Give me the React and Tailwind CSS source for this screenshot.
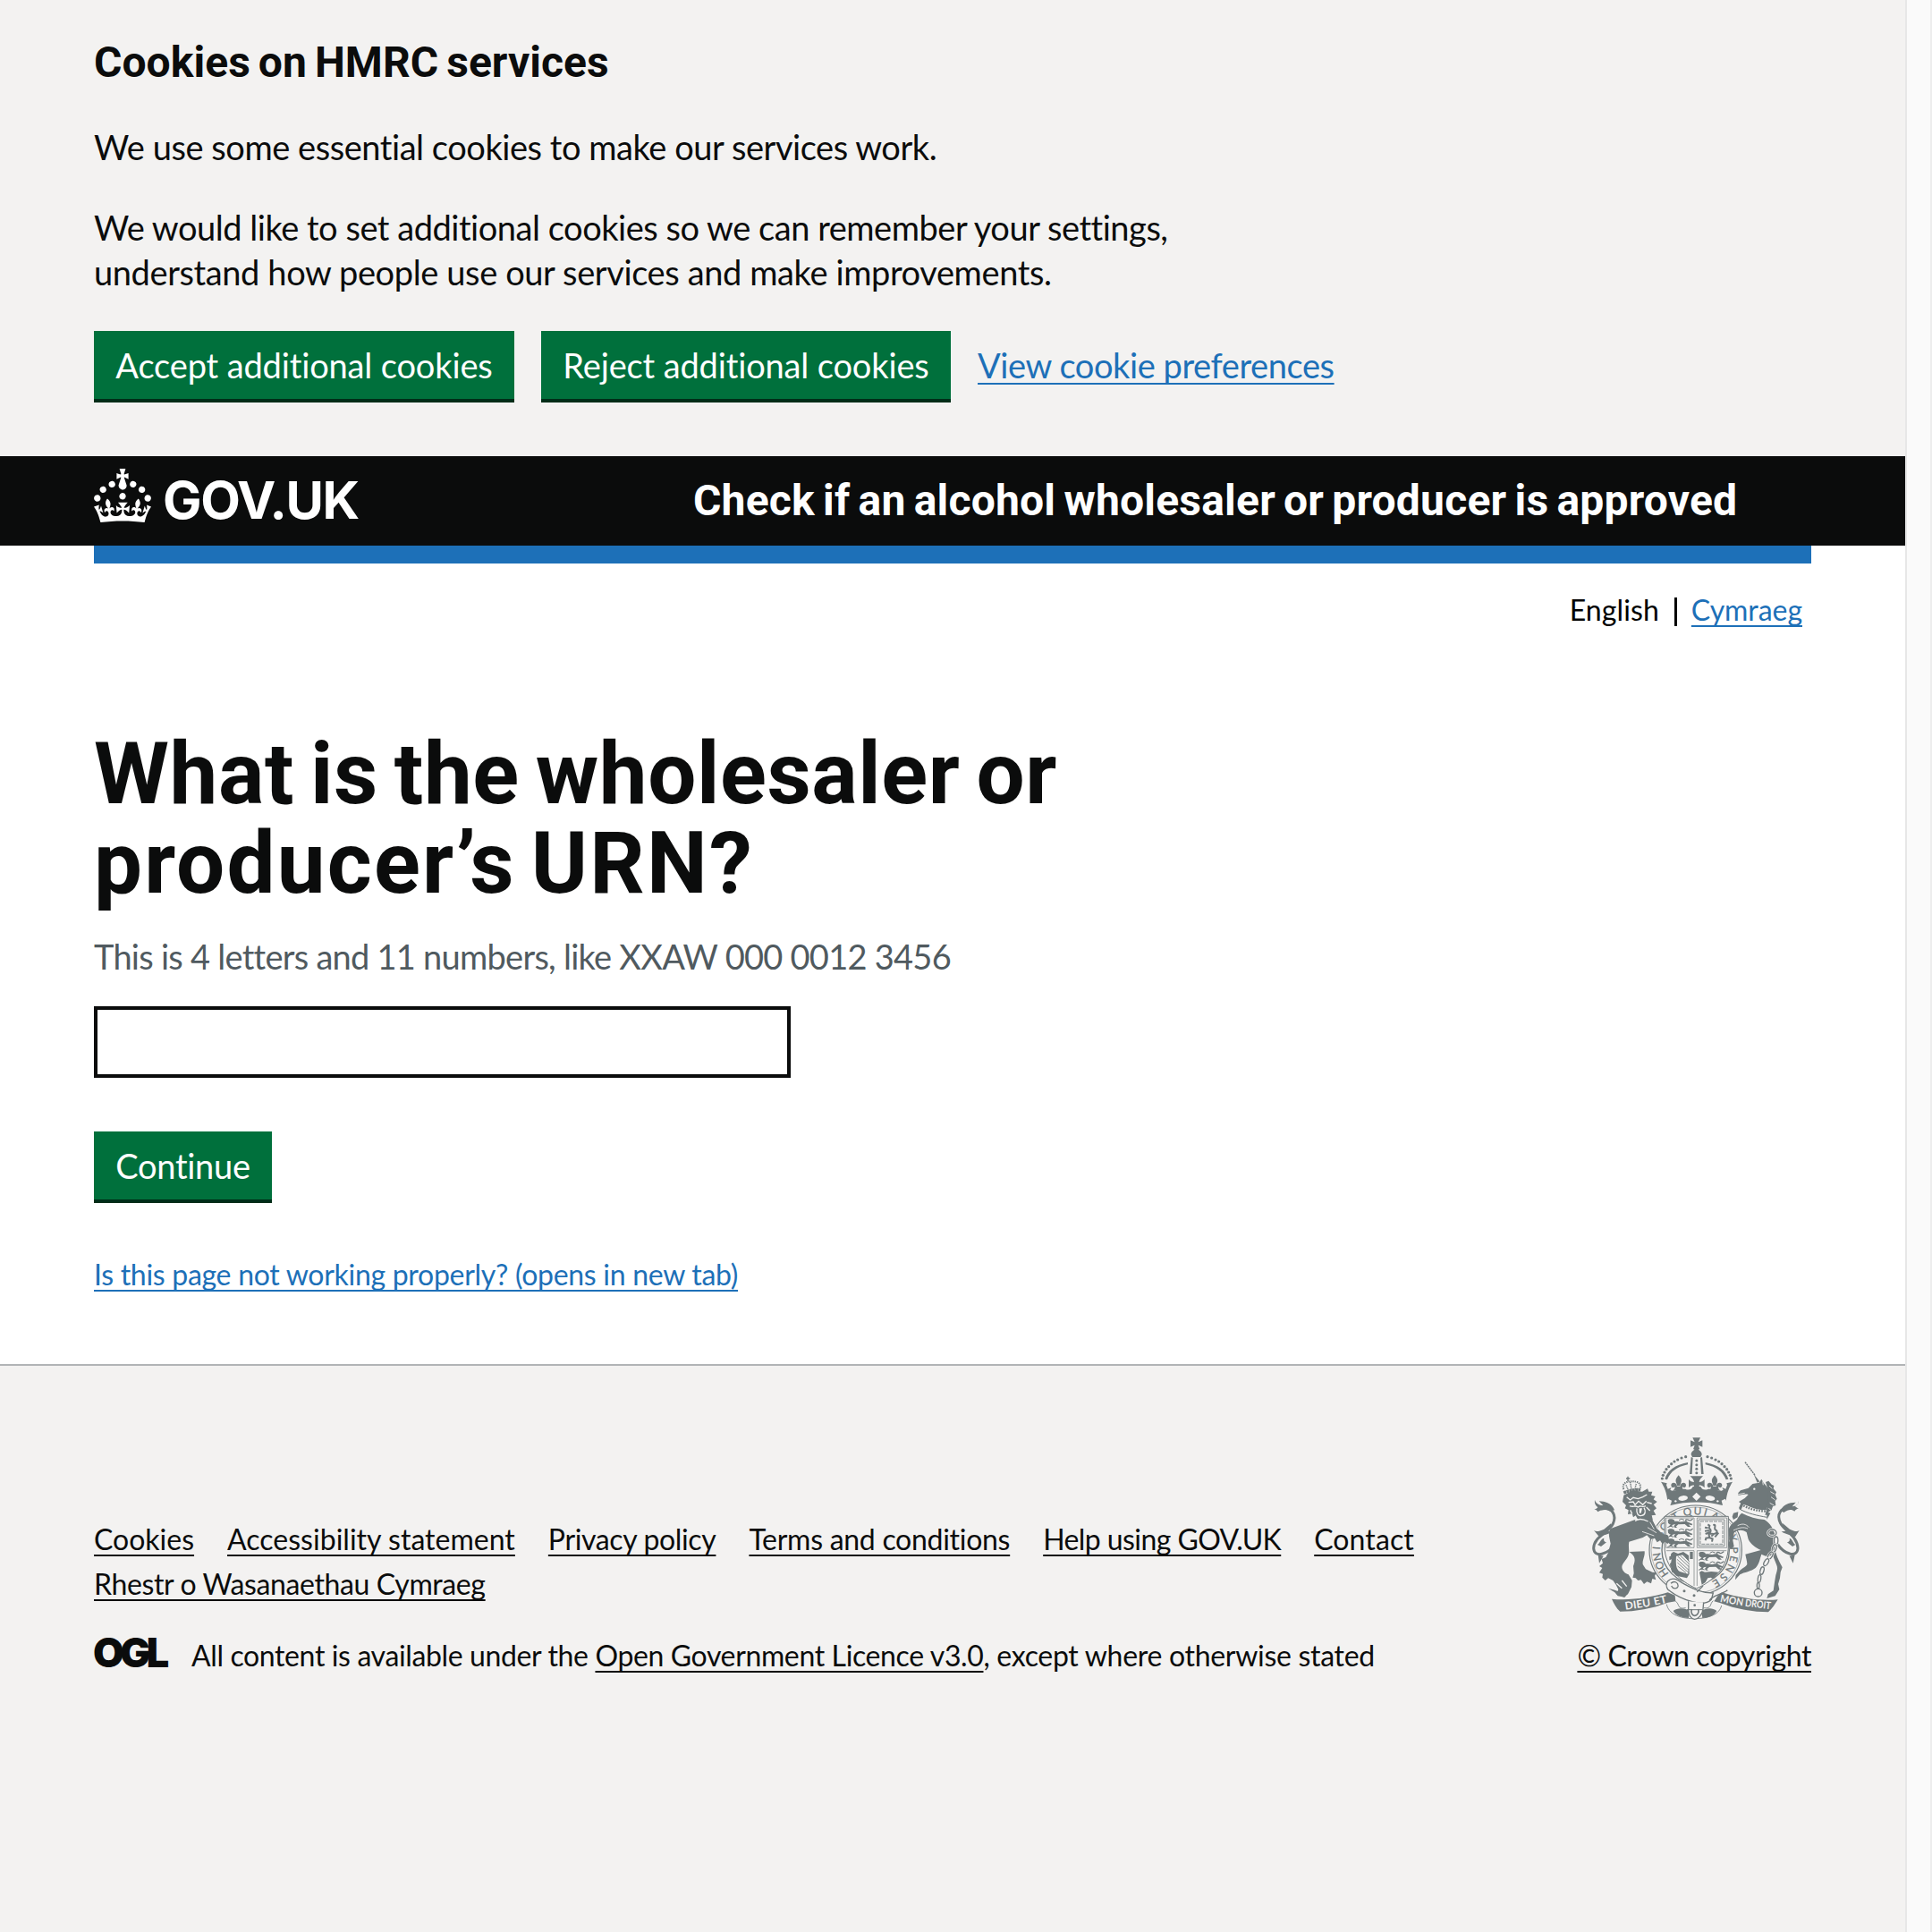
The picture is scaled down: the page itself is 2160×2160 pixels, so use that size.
const BODY = "font-['Lato',sans-serif] [font-variant-ligatures:none]";
const HEAD = "font-['Roboto',sans-serif] font-bold";
const LINK =
  "underline decoration-2 underline-offset-[5px] [text-decoration-skip-ink:none]";

function GreenButton({ children, className }) {
  return (
    <button
      type="button"
      className={`h-[76px] shrink-0 whitespace-nowrap bg-[#00703c] pb-[1px] text-center text-[38px] leading-[38px] text-white shadow-[0_4px_0_#002d18] ${className}`}
    >
      {children}
    </button>
  );
}

function Crown() {
  return (
    <svg viewBox="0 0 32 30" className="h-[60px] w-16 shrink-0" fill="currentColor" aria-hidden="true">
      <path d="M22.6 10.4c-1 .4-2-.1-2.4-1-.4-.9.1-2 1-2.4.9-.4 2 .1 2.4 1s-.1 2-1 2.4m-5.9 6.7c-.9.4-2-.1-2.4-1-.4-.9.1-2 1-2.4.9-.4 2 .1 2.4 1s-.1 2-1 2.4m10.8-3.7c-1 .4-2-.1-2.4-1-.4-.9.1-2 1-2.4.9-.4 2 .1 2.4 1s0 2-1 2.4m3.3 4.8c-1 .4-2-.1-2.4-1-.4-.9.1-2 1-2.4.9-.4 2 .1 2.4 1s-.1 2-1 2.4M17 4.7l2.3 1.2V2.5l-2.3.7-.2-.2.9-3h-3.4l.9 3-.2.2c-.1.1-2.3-.7-2.3-.7v3.4L15 4.7c.1.1.1.2.2.2l-1.3 4c-.1.2-.1.4-.1.6 0 1.1.8 2 1.9 2.2h.7c1-.2 1.9-1.1 1.9-2.1 0-.2 0-.4-.1-.6l-1.3-4c-.1-.2 0-.2.1-.3m-7.6 5.7c.9.4 2-.1 2.4-1 .4-.9-.1-2-1-2.4-.9-.4-2 .1-2.4 1s0 2 1 2.4m-5 3c.9.4 2-.1 2.4-1 .4-.9-.1-2-1-2.4-.9-.4-2 .1-2.4 1s.1 2 1 2.4m-3.2 4.8c.9.4 2-.1 2.4-1 .4-.9-.1-2-1-2.4-.9-.4-2 .1-2.4 1s0 2 1 2.4m14.8 11c4.4 0 8.6.3 12.3.8 1.1-4.5 2.4-7 3.7-8.8l-2.5-.9c.2 1.3.3 1.9 0 2.7-.4-.4-.8-1.1-1.1-2.3l-1.2 4c.7-.5 1.3-.8 2-.9-1.1 2.5-2.6 3.1-3.5 3-1.1-.2-1.7-1.2-1.5-2.1.3-1.2 1.5-1.5 2.1-.1 1.1-2.3-.8-3-2-2.3 1.9-1.9 2.1-3.5.6-5.6-2.1 1.6-2.1 3.2-1.2 5.5-1.2-1.4-3.2-.6-2.5 1.6.9-1.4 2.1-.5 1.9.8-.2 1.1-1.7 2.1-3.5 1.9-2.7-.2-2.9-2.1-2.9-3.6.7-.1 1.9.5 2.9 1.9l.4-4.3c-1.1 1.1-2.1 1.4-3.2 1.4.4-1.2 2.1-3 2.1-3h-5.4s1.7 1.9 2.1 3c-1.1 0-2.1-.2-3.2-1.4l.4 4.3c1-1.4 2.2-2 2.9-1.9-.1 1.5-.2 3.4-2.9 3.6-1.9.2-3.4-.8-3.5-1.9-.2-1.3 1-2.2 1.9-.8.7-2.3-1.2-3-2.5-1.6.9-2.2.9-3.9-1.2-5.5-1.5 2-1.3 3.7.6 5.6-1.2-.7-3.1 0-2 2.3.6-1.4 1.8-1.1 2.1.1.2.9-.3 1.9-1.5 2.1-.9.2-2.4-.5-3.5-3 .6 0 1.2.3 2 .9l-1.2-4c-.3 1.1-.7 1.9-1.1 2.3-.3-.8-.2-1.4 0-2.7l-2.9.9C1.3 23 2.6 25.5 3.7 30c3.7-.5 7.9-.8 12.3-.8" />
    </svg>
  );
}

const INK = "#6f787a";
const PAPER = "#f3f2f1";
const MOTTO = [
  ["H", -125], ["O", -113], ["N", -100], ["I", -87], ["S", -66], ["O", -53], ["T", -31], ["Q", -12], ["U", 3], ["I", 15],
  ["A", 30], ["Y", 72], ["P", 90], ["E", 103], ["N", 118], ["S", 134], ["E", 148],
];
const DOTS = [
  [353, 188], [356, 177], [361, 167], [367, 157], [375, 148], [384, 139], [394, 131], [405, 125], [418, 119], [432, 115],
];

/* A lion passant guardant, facing left. */
function Passant({ x, y }) {
  return (
    <g transform={`translate(${x} ${y})`} fill={INK}>
      <path d="M1 3l6-3h8l7 3 2 6-4 7-6 4-7-2-5-5z" />
      <path d="M22 8c10-3 16 2 24 1s12-4 20 0l18 8-3 4-11-3 8 8h-10l-10-9-22 1-8 7 5 4h-9l-3-5 5-7-9 2-4 7h-9l4-5z" />
      <path d="M64 10c-8-10 2-10 8-6 6 3 8-2 13-5" fill="none" stroke={INK} strokeWidth="4" />
      <path d="M0 28l10-4 10 3M38 4l8-4 10 3" fill="none" stroke={INK} strokeWidth="3" />
    </g>
  );
}

function Fleur({ x }) {
  return (
    <g transform={`translate(${x} 205)`} fill={INK}>
      <path d="M0-28c-7 8-11 14-9 22 2 6 4 9 4 14h10c0-5 2-8 4-14 2-8-2-14-9-22z" />
      <path d="M-5 10c0-14-20-18-20-4 0 8 9 10 12 4 2 8-3 12-8 14h42c-5-2-10-6-8-14 3 6 12 4 12-4 0-14-20-10-20 4z" />
    </g>
  );
}

function RoyalArms() {
  return (
    <svg viewBox="118 50 696 612" className="h-[204px] w-[232px]" aria-hidden="true">
      {/* garter */}
      <g fill="none" stroke={INK}>
        <ellipse cx="465" cy="428" rx="155" ry="150" strokeWidth="3.500" />
        <ellipse cx="465" cy="428" rx="149" ry="144" strokeWidth="1.500" />
        <ellipse cx="465" cy="428" rx="113" ry="112" strokeWidth="4" />
      </g>
      <g fill={INK} stroke={INK} strokeWidth="0.800" textAnchor="middle" className="font-['Lato',sans-serif] text-[35px]">
        {MOTTO.map(([letter, angle]) => (
          <text key={angle} transform={`translate(465 428) rotate(${angle}) translate(0 -119)`}>{letter}</text>
        ))}
      </g>

      {/* imperial crown */}
      <g fill={INK}>
        <path d="M455 51h26l-7 15 14-6v22l-14-6 5 14h-22l5-14-14 6V60l14 6z" />
        <path d="M461 88h14c-1 6 12 8 11 20l-4 8h-28l-4-8c-1-12 12-14 11-20z" />
        {DOTS.map(([x, y]) => (
          <g key={x}>
            <circle cx={x} cy={y} r="4.800" />
            <circle cx={937 - x} cy={y} r="4.800" />
          </g>
        ))}
        <path d="M362 190c8-28 34-48 77-56v7c-38 8-58 24-69 51zM575 190c-8-28-34-48-77-56v7c38 8 58 24 69 51z" />
        <path d="M450 116l6 2-3 55h-8zM487 116l-6 2 3 55h8z" />
        <circle cx="468.500" cy="128" r="4.500" />
        <circle cx="468.500" cy="142" r="4.500" />
        <circle cx="468.500" cy="156" r="4.500" />
        <circle cx="468.500" cy="169" r="4.500" />
        <path d="M349 199l20 5-2 6 5 13 12-5-4 8c10 6 20 4 26-3h24c12 6 22 2 26-8h26c4 10 14 14 26 8h24c6 7 16 9 26 3l-4-8 12 5 5-13-2-6 20-5c-10 16-20 38-22 66-60-14-134-14-196 0-2-28-11-50-22-66z" />
        <path d="M447 180h43c-9 8-12 14-13 20 7 0 13-3 18-9v28c-6-7-12-9-18-8 1 14 4 18 10 24h-37c6-6 9-10 10-24-6-1-12 1-18 8v-28c5 6 11 9 18 9-1-6-4-12-13-20z" />
        <path d="M378 262c60-22 120-22 181 0l-4 16c-50-14-122-14-174 0z" />
      </g>
      <Fleur x={408} />
      <Fleur x={529} />
      <g fill={PAPER}>
        <path d="M373 256l12 6-3 12-9 2-6-10zM564 256l-12 6 3 12 9 2 6-10zM468 235l14 14-14 14-14-14z" />
        <ellipse cx="423" cy="254" rx="16" ry="8.500" transform="rotate(-7 423 254)" />
        <ellipse cx="514" cy="254" rx="16" ry="8.500" transform="rotate(7 514 254)" />
        <circle cx="398" cy="264" r="3.500" />
        <circle cx="539" cy="264" r="3.500" />
      </g>

      {/* shield */}
      <path d="M361 315h214v100c0 70-52 118-107 142-55-24-107-72-107-142z" fill={PAPER} stroke={INK} strokeWidth="3" />
      <g fill="none" stroke={INK} strokeWidth="2">
        <path d="M366 320h94v100h-94zM470 320h100v100H470zM367 430h93v118M470 430h99M470 430v118" />
        <path d="M481 332h75v76h-75z" strokeWidth="2.500" strokeDasharray="12 3" />
        <path d="M475 326h87v88h-87z" strokeWidth="2.500" />
      </g>
      <Passant x={371} y={324} />
      <Passant x={371} y={357} />
      <Passant x={371} y={390} />
      <Passant x={475} y={434} />
      <Passant x={475} y={467} />
      <path d="M478 502l8-4 10 4 22-2 24 2-18 22-8-4-10 2-8 14-12 8z" fill={INK} />
      {/* lion rampant */}
      <path d="M506 342l6 4-2 8c10 6 6 14 0 18l14 2M496 352l10 2M512 362l-16 2M498 374l10-4 4 16-12 2-2 8M510 386l12 4-2 10M524 344c14-4 0 12 8 16s6 12-6 14l-8 8M530 384l12-14" fill="none" stroke={INK} strokeWidth="6" />
      {/* harp */}
      <path d="M392 434c-12 4-12 12-6 20-6 18-4 36 0 46l14 14 36 8 8-14-2-62-18-12-18 6z" fill={INK} />
      <path d="M400 448c10 2 20-8 28 0l14 18-2 42-28-8c-12-8-14-24-12-52z" fill={PAPER} />
      <path d="M404 470l38 34M403 459l39 36M405 482l28 22M406 450l37 34M413 446l30 28M422 444l22 22" stroke={INK} strokeWidth="2.500" />
      <path d="M377 450l10-4v12l-10 4zM379 472l9-2v12l-8 2zM383 492l8-2 4 10-8 4zM446 434h10v24h-10z" fill={INK} />

      {/* lion: tail */}
      <path d="M148 290c40-8 52 22 40 50-14 30-64 42-65 82 2 34 48 22 76-18" fill="none" stroke={INK} strokeWidth="9" />
      <path d="M127 260c4 12 16 18 28 18l-14-14c20 0 44 8 52 30l-14 4c-14-8-28-8-42 2-2-6-6-8-12-8 6-2 10-4 12-8-6-4-12-12-10-24zM124 362c10 6 18 2 34-4l24-20c0 12-6 20-14 26l20 2c-14 10-34 12-46 18zM136 410c10-6 8-18 22-22-2 8 0 12 8 14l-18 14zM138 444l4 28 14-24z" fill={INK} />
      {/* lion: body, hind legs */}
      <g fill={INK}>
        <path d="M262 326l50 6 20 32-30 14-14 8-46 14c-4 20 4 34-4 50-6 12-18 22-20 34 0 12 10 22 22 26l12 20-2 22-12 24-14 10-14-8-10-2 6-16-8-16-10-14-16-8-10 8-10-10 2-12-12-4 10-16-10-6 12-10-4-14 14-6 8-16 8-30c-4-22-10-34 0-50z" />
        <path d="M242 434l52-2c2 18-8 28-6 44l10 16 22 10 14 2-6 10 4 14-12-4-4 16-14-6-10 8-10-14-10 2-8-8-10-2 4-14-2-24c8-20 8-34-14-48z" />
        <path d="M172 556l22 6 10 4 14-6 18 14-8 12-24-4-10-12z" />
        <path d="M300 316l14 0 22 40 18 18 18 4 4 14-4 16-10-8-8 8-8-12-10 6-8-14-14 4-12-14-22-6-18-24z" />
      </g>
      <path d="M200 540l18 16M218 530l16 20" stroke={PAPER} strokeWidth="4" />
      {/* lion: mane and face */}
      <path d="M224 244l-4 22 12 12-4 10 12 6-2 14 14-2 4 12 8-6 10 18 14 2 10 14 12-22 12 4-4-16 14-2-8-14 10-8-10-12 12-10-12-8 6-10-14-4 4-12-12 0-4-10-18 10-32-4z" fill={INK} />
      <g fill="none" stroke={PAPER} strokeWidth="4">
        <path d="M234 250l12 10 10-8 16 4 16-6 14-8M240 268l16-2 6 10 12-12 14 12 12-12M244 280c12 6 18-4 28 4 8-8 14 2 26-4M268 288c-2 16 4 28 16 24 14-2 14-16 8-26M300 284l12 12M302 268l16 4M246 294l6 12M262 330c14-10 28-6 44 2" />
      </g>
      <path d="M276 288h10l-4 16h-6z" fill={PAPER} />
      {/* lion: crown */}
      <g fill="none" stroke={INK}>
        <path d="M224 224c-8-18 10-28 26-26 20-2 36 8 28 26" strokeWidth="6" strokeDasharray="4 3" />
        <path d="M246 200l4 26M232 210l6 14M266 206l-4 14" strokeWidth="4" strokeDasharray="4 2" />
        <path d="M224 236c18-8 36-12 56-10" strokeWidth="10" strokeDasharray="9 1" />
        <path d="M238 181v16M232 188h13" strokeWidth="4" />
      </g>
      <path d="M312 334l14 24M326 334l12 24M286 366l40 14M304 352l30 18" stroke={PAPER} strokeWidth="2.500" />

      {/* unicorn: horn, head, mane */}
      <path d="M631 133l34 45" stroke={INK} strokeWidth="4.500" strokeDasharray="6 2" />
      <path d="M660 174l20 24-8 4z" fill={INK} />
      <g fill={INK}>
        <path d="M608 236l8-8 26-8 14-14 22-4 8-12 8 14c18 16 22 42 18 64l-10 26c-24 0-46-6-66-16-14-4-22-8-26-12l20-12 12-12c-12-4-20 2-34 2z" />
        <path d="M700 200l10-4 10 12 8 4-2 10 10 12-4 8 6 14-6 8 2 14-10 4-4 12-10 6-4 10h-8c12-34 14-78 2-110z" />
      </g>
      <path d="M712 212l10 10M716 232l14 8M718 250l14 10M714 270l14 8M710 288l8 6M608 241l22-4M690 198l2 12" stroke={PAPER} strokeWidth="2.500" />
      <circle cx="662" cy="223" r="3.500" fill={PAPER} />
      <path d="M618 274c26 18 60 24 90 24" fill="none" stroke={INK} strokeWidth="7" strokeDasharray="5 4" />
      <path d="M612 290c28 16 60 22 92 28" fill="none" stroke={INK} strokeWidth="3" />
      <path d="M620 262l-10 26 8 4 10-24zM704 300l12 4-12 22zM592 304l16-4-2 18-14 8-4-10z" fill={INK} />
      {/* unicorn: tail */}
      <path d="M786 288c-38-6-50 22-36 50 12 24 58 44 58 84-2 32-44 22-68-14" fill="none" stroke={INK} strokeWidth="9" />
      <path d="M811 262c0 12-8 18-22 20l12-14c-24 0-44 8-50 28l10 6c14-10 26-12 36-4 4-6 8-8 14-10-6-2-10-4-12-8 8-4 14-10 12-18zM813 362c-10 6-16 2-32-4l-24-20c0 12 6 20 14 26l-18 2c14 10 34 12 46 18zM800 410c-10-6-8-18-20-22 2 8 0 12-8 14l18 14zM798 444l-6 28-12-24z" fill={INK} />
      {/* unicorn: body and legs */}
      <g fill={INK}>
        <path d="M604 326c4-8 8-16 16-22 24 12 50 20 76 22 18 10 32 32 36 56l-2 40-12 24c-10 4-22 2-32-4-6 18-8 34-20 46-14 12-38 14-52 22l-16 18 2-16 14-16c10-8 20-12 24-20 0-12-4-22-6-34l52-14c-18-8-34-20-42-36l-6-24c-16-10-32-8-42 2l-4 26 4 20-12 10-8-14 4-14-2-38c2-14 14-22 28-34z" />
        <path d="M730 420c4 24 14 44 26 66l-6 16-2 20-6 20 4 18-14 22-28 8 4-14 18-12 4-28 4-24c4-14 8-24 2-36l-12-30z" />
      </g>
      <path d="M592 362c20-10 34-12 48-6M606 346c16-8 28-6 38 6" fill="none" stroke={PAPER} strokeWidth="2.500" />
      {/* chain */}
      <g fill="none" stroke={INK} strokeWidth="4">
        <ellipse cx="722" cy="370" rx="14" ry="11" stroke={PAPER} strokeWidth="9" />
        <ellipse cx="722" cy="370" rx="14" ry="11" />
        {[[735, 396, 0], [729, 422, 18], [716, 446, 30], [702, 469, 30]].map(([x, y, r]) => (
          <g key={y} transform={`rotate(${r} ${x} ${y})`}>
            <ellipse cx={x} cy={y} rx="6.500" ry="13" stroke={PAPER} strokeWidth="8" />
            <ellipse cx={x} cy={y} rx="6.500" ry="13" />
          </g>
        ))}
        <ellipse cx="688" cy="497" rx="6" ry="13" transform="rotate(16 688 497)" />
        <ellipse cx="679" cy="524" rx="5" ry="13" transform="rotate(8 679 524)" />
        <ellipse cx="675" cy="547" rx="4" ry="10" />
        <circle cx="675" cy="571" r="13" />
      </g>

      {/* scroll */}
      <g fill={INK}>
        <path d="M184 592c60 6 130-4 188-22l24 10 2 20-26 4c-50 20-110 30-160 30-14-12-20-26-28-42z" />
        <path d="M741 594c-60 6-130-6-188-24l-14 12-12 18 22 6c50 20 110 30 160 30 14-12 22-26 32-42z" />
        <path d="M390 632c16-14 40-8 56-2l-4 26c-20 0-44-8-52-24zM536 632c-16-14-36-8-52-2l4 26c20 0 40-8 48-24z" />
      </g>
      <path d="M368 610c6 30 40 48 92 48s86-16 92-44M398 600c14 8 4 28 34 22M524 598c-12 10-4 28-32 24" fill="none" stroke={INK} strokeWidth="2.500" />
      <g fill={PAPER} className="font-['Lato',sans-serif] text-[36px] font-bold">
        <text transform="translate(230 628) rotate(-8)" textLength="86" lengthAdjust="spacingAndGlyphs">DIEU</text>
        <text transform="translate(327 613) rotate(-12)" textLength="44" lengthAdjust="spacingAndGlyphs">ET</text>
      </g>
      <g fill={PAPER} className="font-['Lato',sans-serif] text-[34px] font-bold">
        <text transform="translate(546 601) rotate(11)" textLength="78" lengthAdjust="spacingAndGlyphs">MON</text>
        <text transform="translate(630 616) rotate(7)" textLength="87" lengthAdjust="spacingAndGlyphs">DROIT</text>
      </g>

      {/* belt and buckle */}
      <path d="M372 532c16-16 34-4 48 6 30 16 60 34 104 34l-6 22c-14 14-40 14-62 8-30-8-60-22-84-42-6-8-6-20 0-28z" fill={PAPER} stroke={INK} strokeWidth="4" />
      <path d="M382 540c12-12 26-2 24 10-4 10-18 8-22-2M470 568l20-20M512 596c10-16 40-18 60-34" fill="none" stroke={INK} strokeWidth="4" />
      <circle cx="427" cy="565" r="4.500" fill={INK} />
      <circle cx="460" cy="580" r="4.500" fill={INK} />
      <path d="M441 600v30c0 16 10 30 21 30s26-14 28-34l2-22" fill={PAPER} stroke={INK} strokeWidth="4" />
      <path d="M436 628h52" stroke={INK} strokeWidth="3" />
      <path d="M452 626c-4 12 2 22 10 22s16-10 12-22" fill="none" stroke={INK} strokeWidth="5" />
      <circle cx="462" cy="613" r="4" fill={INK} />
    </svg>
  );
}

export default function App() {
  return (
    <div className={`flex h-[2160px] w-[2160px] overflow-hidden bg-[#f3f2f1] text-[#0b0c0c] ${BODY}`}>
      <div className="flex w-[2130px] flex-col">
        <section className="h-[510px] pt-10 pl-[105px]">
          <h2 className={`${HEAD} text-[48px] leading-[60px] tracking-[0.05px] [word-spacing:-3px]`}>Cookies on HMRC services</h2>
          <div className="mt-[39px] text-[38px] leading-[50px] whitespace-nowrap">
            <p className="mb-10 tracking-[-0.45px]">We use some essential cookies to make our services work.</p>
            <p>
              <span className="tracking-[-0.47px]">We would like to set additional cookies so we can remember your settings,</span>
              <br />
              <span className="tracking-[-0.39px]">understand how people use our services and make improvements.</span>
            </p>
          </div>
          <div className="mt-[41px] flex items-start gap-[30px]">
            <GreenButton className="w-[470px] tracking-[-0.14px]">Accept additional cookies</GreenButton>
            <GreenButton className="w-[458px] tracking-[-0.14px]">Reject additional cookies</GreenButton>
            <a className={`${LINK} mt-[13px] text-[38px] leading-[50px] tracking-[-0.42px] text-[#1d70b8]`}>View cookie preferences</a>
          </div>
        </section>

        <header className="flex h-[100px] items-start bg-[#0b0c0c] pl-[105px] text-white">
          <div className="flex w-[670px] items-start pt-[14px]">
            <Crown />
            <span className="mt-[5px] ml-[13px] font-['Inter',sans-serif] text-[58px] leading-[60px] font-bold tracking-[-1.4px]">GOV.UK</span>
          </div>
          <span className={`${HEAD} pt-5 text-[48px] leading-[60px] tracking-[0.21px] whitespace-nowrap [word-spacing:-3px]`}>
            Check if an alcohol wholesaler or producer is approved
          </span>
        </header>

        <main className="h-[915px] bg-white px-[105px]">
          <div className="h-5 bg-[#1d70b8]" />
          <nav className="mt-[32px] flex h-10 items-start justify-end pr-[10px] text-[32px] leading-10">
            <span className="tracking-[0.1px] text-black">English</span>
            <span className="mr-[16px] ml-[17px] mt-[6px] h-8 w-[3px] bg-black" />
            <a className={`${LINK} tracking-[-0.05px] text-[#1d70b8]`}>Cymraeg</a>
          </nav>
          <h1 className={`${HEAD} mt-[113px] text-[96px] leading-[100px] whitespace-nowrap`}>
            <span className="tracking-[0.6px] [word-spacing:-6.5px]">What is the wholesaler or</span>
            <br />
            <span className="tracking-[2.2px] [word-spacing:-9px]">producer’s URN?</span>
          </h1>
          <p className="mt-[29px] text-[38px] leading-[50px] tracking-[-0.74px] text-[#505a5f]">
            This is 4 letters and 11 numbers, like XXAW 000 0012 3456
          </p>
          <div className="mt-[31px] h-20 w-[779px] border-4 border-[#0b0c0c]" />
          <GreenButton className="mt-[60px] block w-[199px] tracking-[-0.28px]">Continue</GreenButton>
          <p className="mt-[64px] text-[32px] leading-10 tracking-[-0.29px] text-[#1d70b8]">
            <a className={LINK}>Is this page not working properly? (opens in new tab)</a>
          </p>
        </main>

        <footer className="flex flex-1 items-start justify-between border-t-2 border-[#b1b4b6] px-[105px] pt-20 text-[32px] leading-[50px] whitespace-nowrap">
          <div className="pt-[89px]">
            <ul className="flex w-[1500px] flex-wrap gap-x-[37px]">
              <li><a className={LINK}>Cookies</a></li>
              <li><a className={`${LINK} tracking-[0.02px]`}>Accessibility statement</a></li>
              <li><a className={`${LINK} tracking-[-0.36px]`}>Privacy policy</a></li>
              <li><a className={`${LINK} tracking-[-0.28px]`}>Terms and conditions</a></li>
              <li><a className={`${LINK} tracking-[-0.58px]`}>Help using GOV.UK</a></li>
              <li><a className={`${LINK} tracking-[0.1px]`}>Contact</a></li>
              <li><a className={`${LINK} tracking-[-0.38px]`}>Rhestr o Wasanaethau Cymraeg</a></li>
            </ul>
            <div className="mt-[30px] flex items-start">
              <span className="-mt-px -ml-px w-[110px] font-['Inter',sans-serif] text-[45px] leading-[46px] font-black tracking-[-4.6px]">OGL</span>
              <p className="tracking-[-0.37px]">
                All content is available under the <a className={LINK}>Open Government Licence v3.0</a>
                <span className="tracking-[-0.3px]">, except where otherwise stated</span>
              </p>
            </div>
          </div>
          <div className="flex flex-col items-center">
            <div className="pl-[3px]">
              <RoyalArms />
            </div>
            <a className={`${LINK} mt-[15px] tracking-[-0.4px]`}>© Crown copyright</a>
          </div>
        </footer>
      </div>
      <div className="w-[30px] border-r-2 border-l-2 border-r-[#ededed] border-l-[#e7e7e7] bg-[#fafafa]" />
    </div>
  );
}
